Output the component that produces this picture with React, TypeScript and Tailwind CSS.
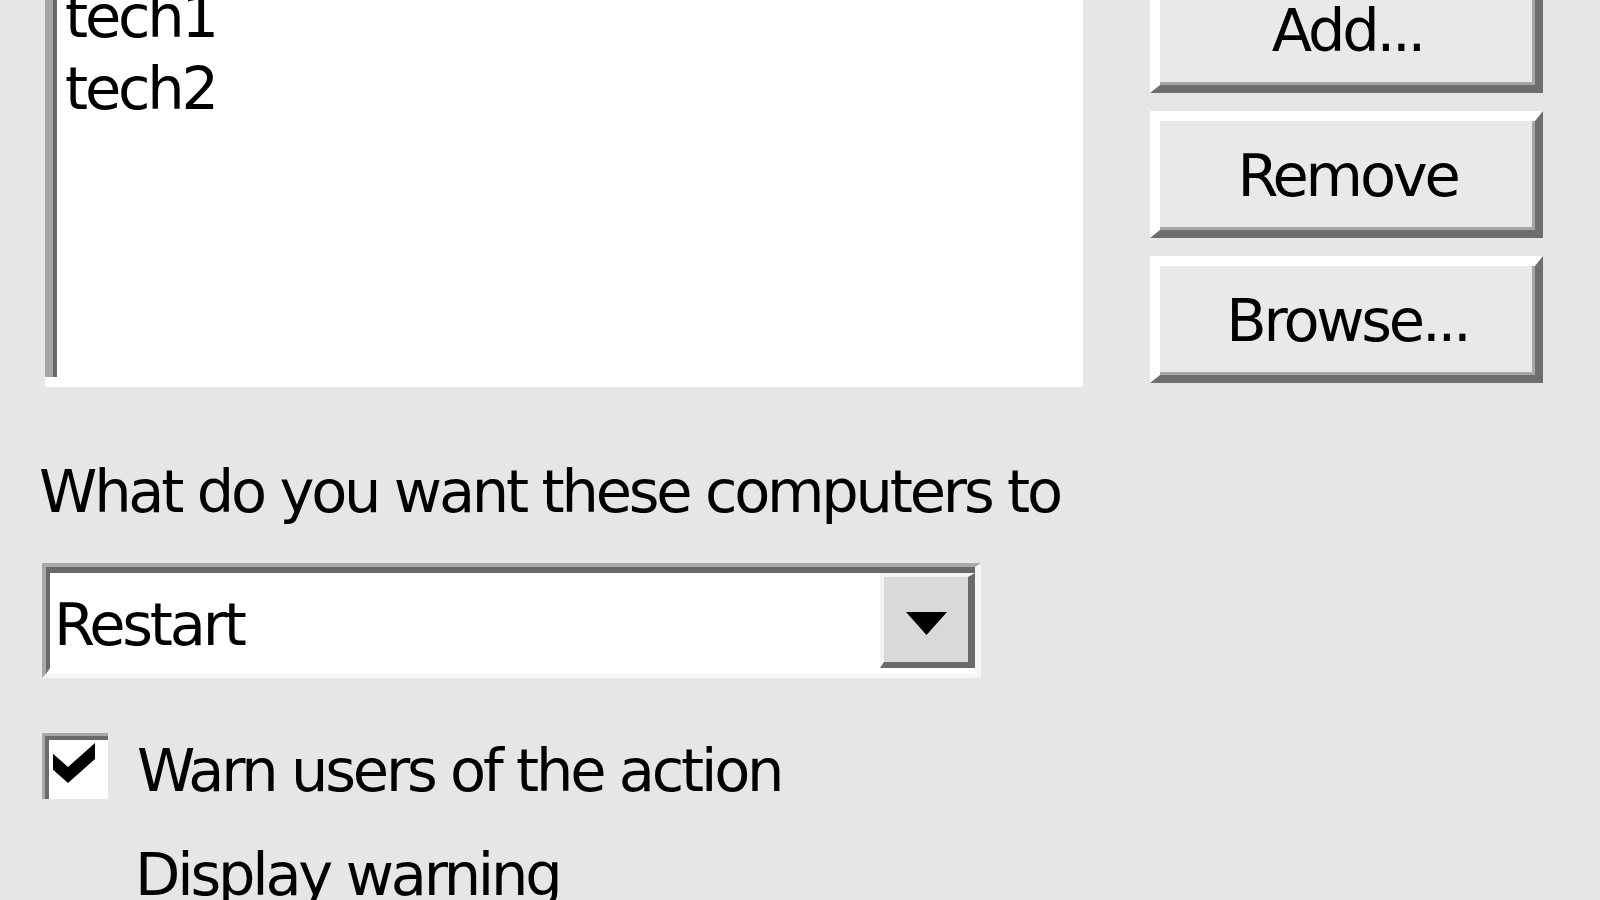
import React from 'react'

const font = "font-['DejaVu_Sans',sans-serif] text-[59px] tracking-[-3.2px] leading-[72px] text-black"

function ClassicButton({ label }: { label: string }) {
  return (
    <div className="h-[127px] w-[393px] border-t-[10px] border-l-[10px] border-b-[8px] border-r-[8px] border-t-white border-l-white border-b-[#6e6e6e] border-r-[#6e6e6e] bg-[#e9e9e9] shadow-[inset_-3px_-3px_0_#a6a6a6] flex items-center justify-center">
      <span className={font}>{label}</span>
    </div>
  )
}

function CheckMark() {
  return (
    <svg width={42} height={40} viewBox="0 0 7 7.5" preserveAspectRatio="none">
      <polygon points="0,2 2.5,4.5 7,0 7,3 2.5,7.5 0,5" fill="#000" />
    </svg>
  )
}

function ListBox() {
  const items = ['tech1', 'tech2']
  return (
    <div className="w-[1038px] h-[427px] bg-white pb-[10px] flex flex-col">
      <div className="flex-1 border-l-[8px] border-l-[#a6a6a6] shadow-[inset_4px_0_0_#686868] pl-[12px] pt-[21px]">
        {items.map((item) => (
          <div key={item} className={font}>
            {item}
          </div>
        ))}
      </div>
    </div>
  )
}

function ComboBox({ value }: { value: string }) {
  return (
    <div className="w-[939px] border-t-4 border-l-4 border-r-[6px] border-b-4 border-t-[#a8a8a8] border-l-[#a8a8a8] border-r-[#f7f7f7] border-b-[#f7f7f7]">
      <div className="h-[107px] border-t-[6px] border-l-4 border-b-[6px] border-t-[#696969] border-l-[#696969] border-b-white bg-white flex">
        <div className={`flex-1 pl-[4px] pt-[16px] ${font}`}>{value}</div>
        <div className="w-[95px] h-[95px] border-t-4 border-l-4 border-b-[6px] border-r-[7px] border-t-[#f4f4f4] border-l-[#f4f4f4] border-b-[#6a6a6a] border-r-[#6a6a6a] bg-[#d9d9d9] flex justify-center pt-[35px]">
          <svg width={41} height={23} viewBox="0 0 41 23">
            <polygon points="0,0 41,0 20.5,23" fill="#000" />
          </svg>
        </div>
      </div>
    </div>
  )
}

export default function App() {
  return (
    <div className="h-screen w-full overflow-hidden bg-[#e6e6e6]">
      <div className="-mt-[40px]">
        <div className="flex pl-[45px]">
          <ListBox />
          <div className="ml-[67px] pt-[6px] flex flex-col gap-[18px]">
            <ClassicButton label="Add..." />
            <ClassicButton label="Remove" />
            <ClassicButton label="Browse..." />
          </div>
        </div>

        <div className={`mt-[69px] ml-[39px] ${font}`}>What do you want these computers to</div>

        <div className="mt-[35px] ml-[42px]">
          <ComboBox value="Restart" />
        </div>

        <div className="mt-[55px] ml-[42px] flex items-start gap-[29px]">
          <div className="w-[66px] h-[66px] border-t-[3px] border-l-[3px] border-t-[#a8a8a8] border-l-[#a8a8a8] bg-white">
            <div className="h-full border-t-4 border-l-4 border-t-[#6a6a6a] border-l-[#6a6a6a] pl-[4px] pt-[3px]">
              <CheckMark />
            </div>
          </div>
          <div className={`mt-[2px] ${font}`}>Warn users of the action</div>
        </div>

        <div className={`mt-[32px] ml-[135px] ${font}`}>Display warning</div>
      </div>
    </div>
  )
}
